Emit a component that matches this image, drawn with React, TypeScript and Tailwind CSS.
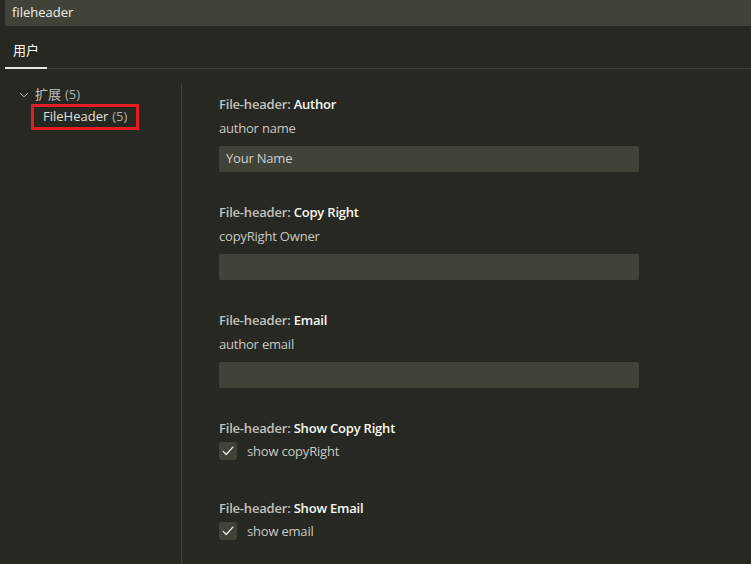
import React from "react";

const font = { fontFamily: '"Segoe UI", "Open Sans", "Noto Sans CJK SC", sans-serif' };

function Check() {
  return (
    <div className="w-[18px] h-[18px] rounded-[3px] bg-[#414339] flex items-center justify-center">
      <svg width="14" height="14" viewBox="0 0 16 16" fill="none">
        <path d="M2.5 8.5 L6 12 L13.5 3.5" stroke="#f0f0f0" strokeWidth="1.4" strokeLinecap="round" strokeLinejoin="round" />
      </svg>
    </div>
  );
}

function Setting({ name, desc, value, checkbox }: { name: string; desc: string; value?: string; checkbox?: boolean }) {
  return (
    <div className="flex flex-col">
      <div className="text-[13px] leading-[18px] font-semibold text-[#c2c2bd] tracking-[-0.2px]">
        File-header: <span className="text-[#f8f8f2]">{name}</span>
      </div>
      {checkbox ? (
        <div className="flex items-center gap-[10px] mt-[5px]">
          <Check />
          <span className="text-[13px] leading-[18px] text-[#c8c8c3] tracking-[-0.2px]">{desc}</span>
        </div>
      ) : (
        <>
          <div className="text-[13px] leading-[18px] text-[#c8c8c3] mt-[6px] tracking-[-0.2px]">{desc}</div>
          <div className="mt-[9px] w-[420px] h-[26px] rounded-[2px] bg-[#414339] flex items-center px-[7px] text-[13px] text-[#cfcfca] tracking-[-0.2px]">
            {value}
          </div>
        </>
      )}
    </div>
  );
}

export default function App() {
  return (
    <div className="w-[751px] h-[564px] bg-[#272822] overflow-hidden flex flex-col" style={font}>
      <div className="ml-[5px] h-[26px] bg-[#414339] flex items-center pl-[7px] text-[13px] text-[#f0f0ea]">
        fileheader
      </div>
      <div className="ml-[5px] mt-[12px] border-b border-[#414339] h-[31px] flex">
        <div className="w-[42px] border-b-2 border-[#e8e8e2] text-[13px] text-[#f8f8f2] flex justify-center pt-[3px] mb-[-1px]">
          用户
        </div>
      </div>
      <div className="flex flex-1 mt-[14px]">
        <div className="w-[182px] border-r border-[#414339] pt-[2px]">
          <div className="flex items-center pl-[18px] h-[20px] text-[13px] text-[#c2c2bd]">
            <svg width="12" height="12" viewBox="0 0 16 16" fill="none" className="mr-[5px]">
              <path d="M3 5.5 L8 10.5 L13 5.5" stroke="#c2c2bd" strokeWidth="1.3" fill="none" />
            </svg>
            <span>扩展</span>
            <span className="ml-[4px] text-[#b0b0aa]">(5)</span>
          </div>
          <div className="ml-[31px] mt-[-1px] w-[108px] h-[26px] border-[3px] border-[#e51c23] flex items-center pl-[9px] text-[13px] text-[#e0e0da]">
            FileHeader <span className="ml-[4px] text-[#b0b0aa]">(5)</span>
          </div>
        </div>
        <div className="flex flex-col pl-[37px] pt-[12px] gap-[31px]">
          <Setting name="Author" desc="author name" value="Your Name" />
          <Setting name="Copy Right" desc="copyRight Owner" value="" />
          <Setting name="Email" desc="author email" value="" />
          <div className="flex flex-col gap-[39px]">
            <Setting name="Show Copy Right" desc="show copyRight" checkbox />
            <Setting name="Show Email" desc="show email" checkbox />
          </div>
        </div>
      </div>
    </div>
  );
}
